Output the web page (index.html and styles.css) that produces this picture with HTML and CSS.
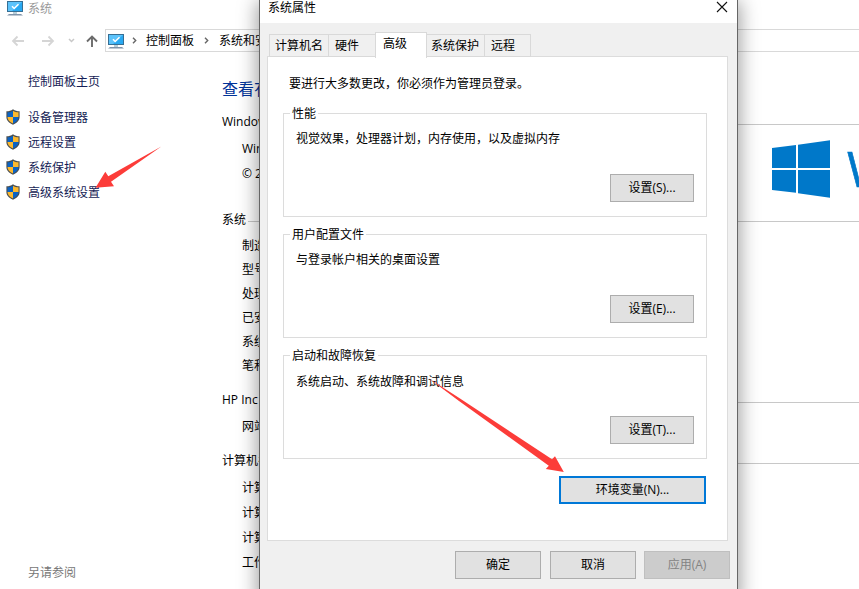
FILE: index.html
```html
<!DOCTYPE html>
<html lang="zh-CN">
<head>
<meta charset="utf-8">
<title>系统</title>
<link rel="stylesheet" href="styles.css">
</head>
<body>
<svg class="defs" width="0" height="0">
  <defs>
    <symbol id="pc" viewBox="0 0 16 15">
      <rect x="0.5" y="0.5" width="15" height="10" fill="#29a9f2" stroke="#376f94"/>
      <path d="M1 1h14L5 10H1z" fill="#5cc3fb"/>
      <path d="M5 5.3l2.2 2.2 4.3-4.3" fill="none" stroke="#fff" stroke-width="1.5"/>
      <path d="M6 11h4v2H6z" fill="#b9cfda"/>
      <path d="M2 13h12l2 1.6H0z" fill="#8094aa"/>
    </symbol>
    <symbol id="shield" viewBox="0 0 14 16">
      <path d="M7 .3C5 1.700 3 2.300.4 2.300V8c0 3.500 2.700 6 6.600 7.700C10.900 14 13.600 11.500 13.600 8V2.300C11 2.300 9 1.700 7 .3z" fill="#4b4f50"/>
      <path d="M7 1.700C5.500 2.700 3.500 3.300 1.500 3.300V8H7z" fill="#0b63c4"/>
      <path d="M7 1.700c1.500 1 3.500 1.600 5.500 1.600V8H7z" fill="#fdb92e"/>
      <path d="M1.500 8H7v6.500C3.500 12.900 1.500 10.700 1.500 8z" fill="#fdb92e"/>
      <path d="M12.500 8H7v6.500c3.500-1.600 5.500-3.800 5.500-6.500z" fill="#0b63c4"/>
    </symbol>
  </defs>
</svg>

<div class="window">
  <header class="titlebar">
    <svg class="pc" width="16" height="15"><use href="#pc"/></svg>
    <span>系统</span>
  </header>
  <nav class="navbar">
    <svg class="nav-icons" width="105" height="24" viewBox="0 0 105 24" fill="none">
      <path d="M24 12H13M17.500 7.500L13 12l4.500 4.500" stroke="#d5d5d5" stroke-width="1.800"/>
      <path d="M42 12h11M48.500 7.500L53 12l-4.500 4.500" stroke="#d5d5d5" stroke-width="1.800"/>
      <path d="M69 10l2.500 2.500L74 10" stroke="#c8c8c8" stroke-width="1.500"/>
      <path d="M92 18V7.500M87 12.500l5-5 5 5" stroke="#6b6b6b" stroke-width="1.900"/>
    </svg>
    <div class="address">
      <svg class="pc" width="16" height="15"><use href="#pc"/></svg>
      <svg class="chev" width="5" height="7" viewBox="0 0 5 7"><path d="M1 .8l2.700 2.700L1 6.200"/></svg>
      <span class="crumb">控制面板</span>
      <svg class="chev second" width="5" height="7" viewBox="0 0 5 7"><path d="M1 .8l2.700 2.700L1 6.200"/></svg>
      <span class="crumb">系统和安</span>
    </div>
  </nav>
  <div class="body">
    <aside class="side">
      <a class="home">控制面板主页</a>
      <ul class="links">
        <li><svg width="14" height="16"><use href="#shield"/></svg>设备管理器</li>
        <li><svg width="14" height="16"><use href="#shield"/></svg>远程设置</li>
        <li><svg width="14" height="16"><use href="#shield"/></svg>系统保护</li>
        <li><svg width="14" height="16"><use href="#shield"/></svg>高级系统设置</li>
      </ul>
      <span class="see">另请参阅</span>
    </aside>
    <main class="main">
      <h1>查看有</h1>
      <section class="edition">
        <h2><span>Windows</span></h2>
        <div class="edition-row">
          <div class="edition-text"><p>Win</p><p>© 2</p></div>
          <svg class="flag" width="58" height="58" viewBox="0 0 58 58" fill="#0078c9">
            <path d="M0 8l24-3v23H0zM26 4.700L58 .3V28H26zM0 30h24v22.700L0 50zM26 30h32v27.700l-32-4.400z"/>
          </svg>
          <span class="wordmark">W</span>
        </div>
      </section>
      <section class="system">
        <h2><span>系统</span></h2>
        <p>制造</p><p>型号</p><p>处理</p><p>已安</p><p>系统</p><p>笔和</p>
      </section>
      <section class="support">
        <h2><span>HP Inc</span></h2>
        <p>网站</p>
      </section>
      <section class="names">
        <h2><span>计算机名</span></h2>
        <p>计算</p><p>计算</p><p>计算</p><p>工作</p>
      </section>
    </main>
  </div>
</div>

<div class="dialog">
  <header class="dialog-title">
    <span>系统属性</span>
    <svg width="12" height="12" viewBox="0 0 12 12"><path d="M1 1l10 10M11 1L1 11" stroke="#111" stroke-width="1.100"/></svg>
  </header>
  <div class="tabs">
    <span class="tab t1">计算机名</span><span class="tab t2">硬件</span><span class="tab active">高级</span><span class="tab t4">系统保护</span><span class="tab t5">远程</span>
  </div>
  <div class="panel">
    <p class="intro">要进行大多数更改，你必须作为管理员登录。</p>
    <section class="group">
      <h3>性能</h3>
      <p>视觉效果，处理器计划，内存使用，以及虚拟内存</p>
      <button>设置(S)...</button>
    </section>
    <section class="group">
      <h3>用户配置文件</h3>
      <p>与登录帐户相关的桌面设置</p>
      <button>设置(E)...</button>
    </section>
    <section class="group recovery">
      <h3>启动和故障恢复</h3>
      <p>系统启动、系统故障和调试信息</p>
      <button>设置(T)...</button>
    </section>
    <button class="env">环境变量(N)...</button>
  </div>
  <footer class="actions">
    <button>确定</button><button>取消</button><button disabled>应用(A)</button>
  </footer>
</div>

<svg class="arrows" width="859" height="589" viewBox="0 0 859 589" fill="#fc3c39">
  <path d="M161.300 146.500L111 181.700l3 4.500-18.500 1.600 9.800-16 3 4.500z"/>
  <path d="M428.300 378L460 398.500 552 459.300l3-3 8.800 15.600-18-3 3-3.200L459 401z"/>
</svg>
</body>
</html>
```
FILE: styles.css
```css
* { box-sizing: border-box; }
body {
  margin: 0;
  width: 859px;
  height: 589px;
  overflow: hidden;
  position: relative;
  background: #fff;
  color: #000;
  font: 12px/18px "Open Sans", "Noto Sans CJK SC", sans-serif;
}
h1, h2, h3, p, ul { margin: 0; padding: 0; font-weight: 400; }
svg { display: block; flex: none; }
.defs { position: absolute; }
.window { height: 589px; overflow: hidden; white-space: nowrap; }

.titlebar { display: flex; height: 29px; padding-left: 7px; gap: 5px; color: #999; }
.titlebar .pc { margin-top: 1px; }
.navbar { display: flex; height: 23px; }
.address {
  flex: 1;
  display: flex;
  align-items: center;
  height: 23px;
  border: 1px solid #d9d9d9;
  border-right: 0;
  padding-left: 2px;
}
.address .pc { margin-top: 1px; }
.chev { margin: 0 9px 0 8px; fill: none; stroke: #666; stroke-width: 1.4; }
.chev.second { margin: 0 10px; }

.body { display: flex; height: 537px; }
.side {
  width: 222px;
  padding: 21px 0 7px 28px;
  display: flex;
  flex-direction: column;
  color: #151c55;
}
.links { list-style: none; margin: 14px 0 0 -22px; }
.links li { display: flex; align-items: center; height: 25px; gap: 8px; }
.links svg { margin: -2px 0 0 0; }
.see { margin-top: auto; color: #777; }

.main { flex: 1; padding-top: 26px; }
h1 { font-size: 16px; line-height: 22px; color: #039; }
h2 { display: flex; align-items: center; font-size: 12px; line-height: 18px; height: 18px; }
h2::after { content: ""; flex: 1; height: 1px; margin: 5px 0 0 2px; background: #c8c8c8; }
section p { height: 24px; line-height: 24px; padding-left: 20px; }
.edition { height: 98px; padding-top: 13px; }
.edition-row { display: flex; padding-top: 5px; }
.edition-text { width: 550px; }
.edition-text p { height: 25px; line-height: 25px; }
.flag { margin-top: 4px; }
.wordmark {
  width: 29px;
  height: 58px;
  padding-left: 17px;
  overflow: hidden;
  font-size: 49px;
  line-height: 64px;
  color: #0078c9;
  -webkit-text-stroke: .7px #0078c9;
}
.system { height: 182px; padding-top: 13px; }
.system h2 { margin-bottom: 5px; }
.system h2::after { margin-top: 3px; }
.support { height: 60px; padding-top: 11px; }
.support h2 { margin-bottom: 6px; }
.names { padding-top: 12px; }
.names h2 { margin-bottom: 5px; }
.names p { height: 25px; line-height: 25px; }

.dialog {
  position: absolute;
  left: 259px;
  top: -1px;
  width: 479px;
  height: 600px;
  background: #f0f0f0;
  border: 1px solid #666;
  box-shadow: 0 4px 18px 2px rgba(0, 0, 0, .38);
}
.dialog-title {
  display: flex;
  justify-content: space-between;
  height: 23px;
  padding: 0 9px 0 8px;
  background: #fff;
  line-height: 16px;
}
.dialog-title svg { margin-top: 1px; }
.tabs { display: flex; align-items: flex-end; height: 34px; padding-left: 9px; }
.tab {
  height: 23px;
  margin-right: -1px;
  border: 1px solid #d9d9d9;
  padding: 1px 0 0 5px;
  line-height: 20px;
}
.t1 { width: 60px; }
.t2 { width: 48px; padding-left: 6px; }
.t4 { width: 59px; padding-left: 4px; }
.t5 { width: 47px; padding-left: 6px; }
.tab.active {
  width: 52px;
  height: 26px;
  margin-bottom: -1px;
  padding: 1px 0 0 7px;
  background: #fff;
  border-bottom: 0;
  z-index: 1;
}
.panel {
  width: 461px;
  height: 485px;
  margin: -1px 0 0 7px;
  padding: 18px 20px 0 15px;
  border: 1px solid #dcdcdc;
  background: #fff;
}
.intro { padding-left: 6px; margin-bottom: 20px; }
.group {
  display: flex;
  flex-direction: column;
  align-items: flex-start;
  width: 424px;
  height: 104px;
  margin-bottom: 17px;
  border: 1px solid #dcdcdc;
}
.group h3 {
  margin: -9px 0 0 6px;
  padding: 0 2px;
  background: #fff;
  font-size: 12px;
  line-height: 18px;
}
.group p { height: 18px; line-height: 18px; margin-top: 7px; padding-left: 12px; }
.recovery p { margin-top: 8px; }
button {
  display: block;
  height: 28px;
  padding: 0;
  border: 1px solid #adadad;
  border-radius: 0;
  background: #e1e1e1;
  color: #000;
  font: inherit;
  line-height: 24px;
}
.group button { width: 84px; margin: auto 12px 14px auto; }
.env { width: 147px; margin-left: auto; margin-right: 1px; border: 2px solid #0078d7; }
.actions { display: flex; gap: 9px; padding: 10px 0 0 195px; }
.actions button { width: 86px; }
.actions button:disabled { margin-left: -1px; background: #ccc; border-color: #bfbfbf; color: #838383; }
.arrows { position: absolute; left: 0; top: 0; }
```
